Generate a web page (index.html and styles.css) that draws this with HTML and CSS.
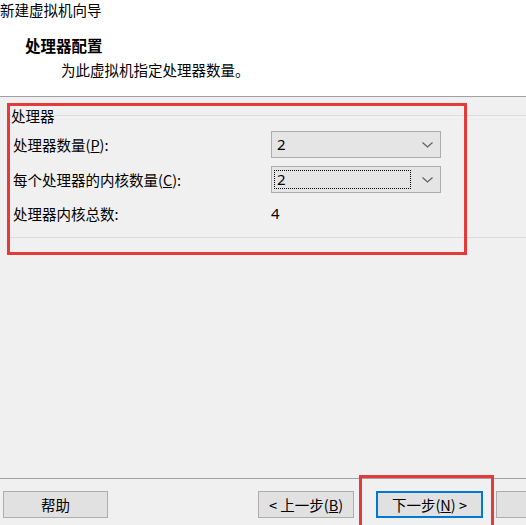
FILE: index.html
```html
<!DOCTYPE html>
<html lang="zh-CN">
  <head>
    <meta charset="UTF-8" />
    <title>新建虚拟机向导</title>
    <link rel="stylesheet" href="styles.css">
  </head>
  <body>
    <!-- Header -->
    <div class="header">
      <p class="wizard-title">新建虚拟机向导</p>
      <p class="step-title">处理器配置</p>
      <p class="step-desc">为此虚拟机指定处理器数量。</p>
    </div>

    <!-- Content -->
    <div class="content">
      <fieldset class="group">
        <legend>处理器</legend>
        <div class="row">
          <span class="label">处理器数量(<u>P</u>):</span>
          <div class="combo">
            <span class="value">2</span>
            <svg class="chevron" width="11" height="6" viewBox="0 0 11 6"><polyline points="0.5,0.5 5.5,5 10.5,0.5" fill="none" stroke="#606060" stroke-width="1.2"/></svg>
          </div>
        </div>
        <div class="row">
          <span class="label">每个处理器的内核数量(<u>C</u>):</span>
          <div class="combo">
            <span class="value focus">2</span>
            <svg class="chevron" width="11" height="6" viewBox="0 0 11 6"><polyline points="0.5,0.5 5.5,5 10.5,0.5" fill="none" stroke="#606060" stroke-width="1.2"/></svg>
          </div>
        </div>
        <div class="row row-total">
          <span class="label">处理器内核总数:</span>
          <span class="total">4</span>
        </div>
      </fieldset>
    </div>

    <!-- Buttons -->
    <div class="footer">
      <button class="btn btn-help">帮助</button>
      <button class="btn btn-back">&lt; 上一步(<u>B</u>)</button>
      <button class="btn btn-next">下一步(<u>N</u>) &gt;</button>
      <button class="btn btn-cancel"></button>
    </div>

    <!-- Red annotation marks -->
    <div class="mark mark-group"></div>
    <div class="mark mark-next"></div>
  </body>
</html>
```

FILE: styles.css
```css
body {
  margin: 0;
  width: 526px;
  height: 525px;
  overflow: hidden;
  position: relative;
  display: flex;
  flex-direction: column;
  background-color: #f0f0f0;
  font-family: "Noto Sans CJK SC", "Noto Sans", sans-serif;
  font-size: 14.5px;
  color: #000;
}

p {
  margin: 0;
  line-height: 17px;
}

.header {
  height: 96px;
  background-color: #fff;
  border-bottom: 1px solid #a0a0a0;
  flex-shrink: 0;
}

.wizard-title {
  padding-top: 1px;
}

.step-title {
  margin-top: 19px;
  padding-left: 25px;
  font-weight: bold;
  font-size: 15.5px;
}

.step-desc {
  margin-top: 7px;
  padding-left: 61px;
}

.content {
  flex: 1;
}

.group {
  margin: 10px -10px 0 8px;
  padding: 0 0 12px 4px;
  border: 1px solid #dcdcdc;
  border-right: none;
  min-width: 0;
}

.group legend {
  padding: 0;
  margin-left: -2px;
  line-height: 17px;
}

.row {
  display: flex;
  align-items: center;
  height: 27px;
  margin-top: 8px;
}

.row:first-of-type {
  margin-top: 7px;
}

.row-total {
  height: 24px;
}

.label {
  width: 258px;
  flex-shrink: 0;
}

.combo {
  width: 168px;
  height: 25px;
  background-color: #e5e5e5;
  border: 1px solid #adadad;
  display: flex;
  align-items: center;
  position: relative;
}

.value {
  font-family: "Noto Sans", sans-serif;
  font-size: 15px;
  margin-left: 5px;
  line-height: 19px;
}

.value.focus {
  margin-left: 2px;
  padding-left: 2px;
  width: 137px;
  height: 19px;
  border: 1px dotted #000;
  box-sizing: border-box;
  line-height: 17px;
}

.chevron {
  position: absolute;
  right: 7px;
  top: 10px;
}

.total {
  font-family: "Noto Sans", sans-serif;
  font-size: 15px;
}

.footer {
  flex-shrink: 0;
  border-top: 1px solid #a0a0a0;
  display: flex;
  padding: 12px 0 0 3px;
  box-sizing: border-box;
  height: 47px;
}

.btn {
  height: 27px;
  background-color: #e1e1e1;
  border: 1px solid #adadad;
  font-family: "Noto Sans CJK SC", "Noto Sans", sans-serif;
  font-size: 14.5px;
  color: #000;
  padding: 0;
  flex-shrink: 0;
}

.btn-help {
  width: 105px;
}

.btn-back {
  width: 96px;
  margin-left: 150px;
}

.btn-next {
  width: 107px;
  margin-left: 22px;
  border: 2px solid #0078d7;
}

.btn-cancel {
  width: 105px;
  margin-left: 13px;
}

.mark {
  position: absolute;
  border: 3px solid #e53a3a;
  box-sizing: border-box;
}

.mark-group {
  left: 7px;
  top: 103px;
  width: 460px;
  height: 152px;
}

.mark-next {
  left: 359px;
  top: 475px;
  width: 135px;
  height: 60px;
}
```
